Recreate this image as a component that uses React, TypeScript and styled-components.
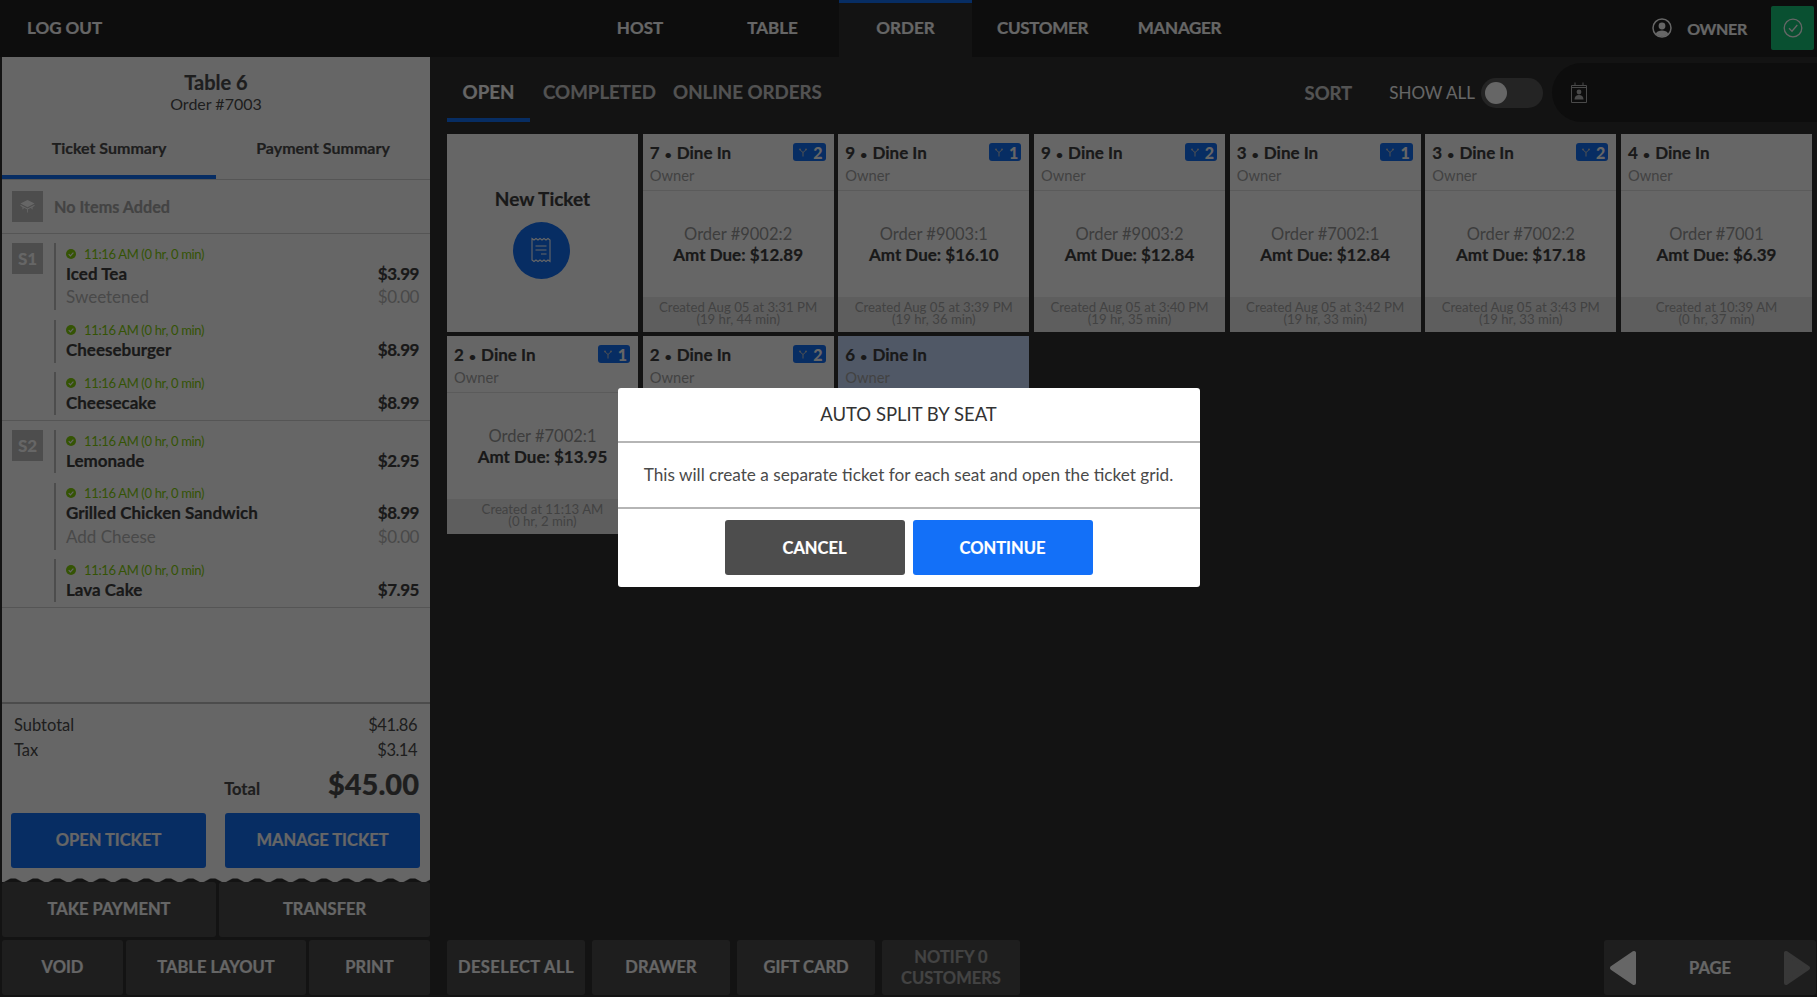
import React from "react";
import styled, { createGlobalStyle, css } from "styled-components";

const Global = createGlobalStyle`
  html, body { margin: 0; height: 100%; overflow: hidden; background: #212121; }
  #root { height: 100%; }
  * { box-sizing: border-box; }
  body { font-family: Lato, "Open Sans", "Liberation Sans", sans-serif; color: #4d4d4d; }
`;

const heavy = css`
  font-weight: 700;
  -webkit-text-stroke: 0.2px currentColor;
`;

const Page = styled.div`
  height: 997px;
  display: grid;
  grid-template-rows: 57px 1fr;
  background: #303030;
`;

const Header = styled.header`
  display: flex;
  align-items: stretch;
  background: #212121;
  padding-right: 3px;
`;
const LogOut = styled.div`
  width: 574px;
  padding: 0 0 3px 27px;
  display: flex;
  align-items: center;
  font-size: 17px;
  color: #fff;
  ${heavy}
`;
const Nav = styled.nav`
  display: flex;
`;
const NavItem = styled.div<{ $w: number; $active?: boolean; $tight?: boolean }>`
  width: ${(p) => p.$w}px;
  display: flex;
  align-items: center;
  justify-content: center;
  font-size: 17px;
  letter-spacing: ${(p) => (p.$tight ? "-0.3px" : "0")};
  color: #fff;
  background: ${(p) => (p.$active ? "#303030" : "transparent")};
  border-top: 3px solid ${(p) => (p.$active ? "#1370f8" : "transparent")};
  padding-bottom: 6px;
  ${heavy}
`;
const UserArea = styled.div`
  margin-left: auto;
  display: flex;
  align-items: center;
  font-size: 16px;
  color: #fff;
  ${heavy}
`;
const UserSvg = styled.svg`
  margin-top: -2px;
`;
const UserName = styled.span`
  margin: 0 24px 0 15px;
  letter-spacing: -0.3px;
`;
const Sync = styled.div`
  width: 43px;
  height: 44px;
  margin-top: -1px;
  border-radius: 2px;
  background: #18c87c;
  display: flex;
  align-items: center;
  justify-content: center;
`;

const Body = styled.div`
  display: grid;
  grid-template-columns: 430px 1fr;
  min-height: 0;
`;

const Side = styled.aside`
  display: flex;
  flex-direction: column;
  padding: 0 0 2px 2px;
  background: #303030;
`;
const Ticket = styled.section`
  height: 824.5px;
  background: #fff;
  display: flex;
  flex-direction: column;
  position: relative;
`;
const TicketHead = styled.div`
  height: 68px;
  padding-top: 14px;
  text-align: center;
`;
const TableName = styled.div`
  font-size: 20px;
  line-height: 22px;
  ${heavy}
`;
const OrderNo = styled.div`
  font-size: 16px;
  line-height: 21px;
`;
const TicketTabs = styled.div`
  display: grid;
  grid-template-columns: 214px 1fr;
  height: 55px;
  border-bottom: 1px solid #d4d4d4;
`;
const TicketTab = styled.div<{ $active?: boolean }>`
  display: flex;
  justify-content: center;
  padding-top: 13px;
  font-size: 16px;
  height: 54px;
  border-bottom: 4px solid ${(p) => (p.$active ? "#1370f8" : "transparent")};
  ${heavy}
`;
const NoItems = styled.div`
  height: 54px;
  padding-left: 10px;
  display: flex;
  align-items: center;
  gap: 11px;
  border-bottom: 1px solid #d4d4d4;
  font-size: 16.2px;
  color: #a8a8a8;
  ${heavy}
`;
const SeatBox = styled.div`
  width: 31px;
  height: 31px;
  background: #c0c0c0;
  color: #fff;
  font-size: 17px;
  font-weight: 900;
  display: flex;
  align-items: center;
  justify-content: center;
  flex: none;
`;
const List = styled.div`
  flex: 1;
  min-height: 0;
`;
const SeatGroup = styled.div`
  display: flex;
  padding: 9px 11px 5px 10px;
  gap: 11px;
  border-bottom: 1px solid #d4d4d4;
`;
const Items = styled.div`
  flex: 1;
  display: flex;
  flex-direction: column;
  gap: 9.5px;
`;
const Item = styled.div<{ $hasMod?: boolean }>`
  border-left: 2px solid #c0c0c0;
  padding: 0 0 ${(p) => (p.$hasMod ? 0 : 4)}px 10px;
`;
const Time = styled.div`
  height: 21px;
  display: flex;
  align-items: center;
  gap: 8px;
  font-size: 13px;
  letter-spacing: -0.35px;
  color: #84d10c;
`;
const Line = styled.div<{ $mod?: boolean }>`
  display: flex;
  justify-content: space-between;
  align-items: ${(p) => (p.$mod ? "flex-end" : "center")};
  font-size: 17px;
  height: ${(p) => (p.$mod ? 28 : 18)}px;
  padding-bottom: ${(p) => (p.$mod ? 3 : 0)}px;
  color: ${(p) => (p.$mod ? "#b6b6b6" : "#404040")};
  ${(p) => (p.$mod ? "" : heavy)}
`;
const Price = styled.span`
  letter-spacing: -0.45px;
`;
const Totals = styled.div`
  border-top: 2px solid #bdbdbd;
  padding: 9px 13px 0 12px;
`;
const TotalRow = styled.div`
  display: flex;
  justify-content: space-between;
  font-size: 16.5px;
  line-height: 25px;
`;
const TotalValue = styled.span`
  letter-spacing: -0.5px;
`;
const GrandRow = styled.div`
  display: flex;
  justify-content: flex-end;
  align-items: baseline;
  margin: 2px -2px 0 0;
  padding-top: 1px;
  height: 40px;
  ${heavy}
`;
const GrandLabel = styled.span`
  font-size: 16.5px;
  margin-right: 68px;
`;
const GrandValue = styled.span`
  font-size: 29px;
  font-weight: 900;
`;
const TicketActions = styled.div`
  display: grid;
  grid-template-columns: 195px 195px;
  justify-content: space-between;
  padding: 0 10px 0 9px;
  margin-top: 8px;
  margin-bottom: 13.5px;
`;
const Primary = styled.button`
  height: 55px;
  border: 0;
  border-radius: 3px;
  padding: 0 0 2px;
  background: #1370f8;
  color: #fff;
  font: 700 16.5px Lato, sans-serif;
  -webkit-text-stroke: 0.2px currentColor;
`;
const Zigzag = styled.svg`
  position: absolute;
  left: 0;
  bottom: 0;
  width: 100%;
  height: 4px;
  display: block;
`;
const ButtonRows = styled.div`
  display: flex;
  flex-direction: column;
  gap: 3.5px;
`;
const ButtonRow = styled.div<{ $cols: string }>`
  display: grid;
  grid-template-columns: ${(p) => p.$cols};
  gap: 3px;
`;
const DarkButton = styled.button<{ $dim?: boolean; $wide?: boolean }>`
  height: 55px;
  border: 0;
  padding: 0 4px;
  border-radius: 3px;
  background: #4d4d4d;
  color: ${(p) => (p.$dim ? "#a8a8a8" : "#fff")};
  font: 700 16.5px/21px Lato, sans-serif;
  letter-spacing: ${(p) => (p.$wide ? "0.45px" : "0")};
  -webkit-text-stroke: 0.2px currentColor;
`;

const Main = styled.main`
  display: flex;
  flex-direction: column;
  padding: 0 5px 2px 17px;
  min-width: 0;
`;
const TabBar = styled.div`
  height: 77px;
  margin-right: -5px;
  display: flex;
  align-items: flex-start;
`;
const OrderTab = styled.div<{ $active?: boolean; $w?: number; $ml?: number }>`
  height: 65px;
  width: ${(p) => (p.$w ? `${p.$w}px` : "auto")};
  margin-left: ${(p) => p.$ml ?? 0}px;
  display: flex;
  justify-content: center;
  padding-top: 24px;
  font-size: 18.7px;
  color: ${(p) => (p.$active ? "#fff" : "#cccccc")};
  border-bottom: 4px solid ${(p) => (p.$active ? "#1370f8" : "transparent")};
  ${heavy}
`;
const RightTools = styled.div`
  margin-left: auto;
  display: flex;
  align-items: center;
  height: 59px;
  margin-top: 6px;
`;
const Sort = styled.span`
  font-size: 18.5px;
  color: #d0d0d0;
  margin-right: 37px;
  ${heavy}
`;
const ShowAll = styled.span`
  font-size: 17px;
  color: #fff;
  margin-right: 6px;
`;
const Toggle = styled.div`
  width: 62px;
  height: 30px;
  border-radius: 15px;
  background: #5a5a5a;
  padding: 4px;
  margin-right: 9px;
`;
const Knob = styled.div`
  width: 22px;
  height: 22px;
  border-radius: 50%;
  background: #fff;
`;
const DatePill = styled.div`
  width: 265px;
  height: 59px;
  border-radius: 30px 0 0 30px;
  background: #212121;
  display: flex;
  align-items: center;
  padding-left: 18px;
`;
const Grid = styled.div`
  display: grid;
  grid-template-columns: repeat(7, 1fr);
  grid-auto-rows: 198px;
  gap: 4px 4.7px;
  flex: 1;
  align-content: start;
`;
const Card = styled.article<{ $selected?: boolean }>`
  display: flex;
  flex-direction: column;
  background: ${(p) => (p.$selected ? "#c8dcff" : "#fff")};
`;
const NewCard = styled.article`
  background: #fff;
  display: flex;
  flex-direction: column;
  align-items: center;
  padding-top: 54px;
`;
const NewTitle = styled.div`
  font-size: 19px;
  line-height: 22px;
  color: #404040;
  ${heavy}
`;
const Circle = styled.div`
  width: 57px;
  height: 57px;
  margin-top: 12px;
  margin-right: 2px;
  border-radius: 50%;
  background: #1370f8;
  display: flex;
  align-items: center;
  justify-content: center;
`;
const CardHead = styled.div`
  height: 57px;
  flex: none;
  padding: 8px 7px 0 7px;
  border-bottom: 1px solid #e4e4e4;
  position: relative;
`;
const CardTitle = styled.div`
  font-size: 17px;
  line-height: 22px;
  color: #404040;
  ${heavy}
`;
const Dot = styled.span`
  font-size: 12px;
  margin: 0 1px;
`;
const CardOwner = styled.div`
  font-size: 14.7px;
  line-height: 19px;
  color: #a6a6a6;
`;
const Badge = styled.div`
  position: absolute;
  top: 9px;
  right: 8px;
  height: 18px;
  display: flex;
  align-items: center;
  gap: 6px;
  padding: 0 3px 0 6px;
  border-radius: 3px;
  background: #1370f8;
  color: #fff;
  font-size: 16px;
  font-weight: 900;
`;
const CardBody = styled.div`
  flex: 1;
  padding-top: 1.5px;
  display: flex;
  flex-direction: column;
  align-items: center;
  justify-content: center;
`;
const CardOrder = styled.div`
  font-size: 16.5px;
  line-height: 20px;
  color: #9a9a9a;
`;
const CardDue = styled.div`
  font-size: 17px;
  line-height: 21px;
  color: #404040;
  ${heavy}
`;
const CardFoot = styled.div`
  height: 35px;
  flex: none;
  padding-top: 4px;
  background: #ebebeb;
  text-align: center;
  font-size: 13.2px;
  line-height: 12px;
  color: #a6a6a6;
`;
const BottomBar = styled.div`
  display: flex;
  gap: 7px;
  margin-right: -4px;
`;
const BottomButton = styled(DarkButton)`
  width: 138px;
`;
const Pager = styled.div`
  margin-left: auto;
  width: 212px;
  height: 55px;
  border-radius: 3px;
  background: #4d4d4d;
  display: flex;
  align-items: center;
  justify-content: space-between;
  padding: 0 5px 0 5px;
  font-size: 16.5px;
  color: #fff;
  ${heavy}
`;

const Overlay = styled.div`
  position: fixed;
  inset: 0;
  background: rgba(0, 0, 0, 0.6);
  display: flex;
  align-items: center;
  justify-content: center;
  padding-bottom: 22px;
`;
const Modal = styled.div`
  width: 582px;
  height: 199px;
  border-radius: 3px;
  background: #fff;
  display: flex;
  flex-direction: column;
`;
const ModalTitle = styled.div`
  height: 55px;
  padding-bottom: 2px;
  display: flex;
  align-items: center;
  justify-content: center;
  border-bottom: 2px solid #b5b5b5;
  font-size: 18.5px;
  color: #333;
`;
const ModalText = styled.div`
  height: 66px;
  padding-bottom: 2px;
  display: flex;
  align-items: center;
  justify-content: center;
  border-bottom: 2px solid #b5b5b5;
  font-size: 17.2px;
  color: #4a4a4a;
`;
const ModalActions = styled.div`
  flex: 1;
  display: flex;
  justify-content: center;
  gap: 8px;
  padding-top: 11px;
`;
const ModalButton = styled.button<{ $primary?: boolean }>`
  width: 180px;
  height: 55px;
  border: 0;
  border-radius: 3px;
  background: ${(p) => (p.$primary ? "#1370f8" : "#4d4d4d")};
  color: #fff;
  font: 700 16.5px Lato, sans-serif;
  -webkit-text-stroke: 0.2px currentColor;
`;

const Check = () => (
  <svg width="10" height="10" viewBox="0 0 10 10">
    <circle cx="5" cy="5" r="5" fill="#84d10c" />
    <path d="M2.7 5.1 4.4 6.8 7.4 3.6" fill="none" stroke="#fff" strokeWidth="1.2" />
  </svg>
);
const Fork = () => (
  <svg width="8" height="9" viewBox="0 0 8 9" fill="none" stroke="#ccc" strokeWidth="1">
    <path d="M4 8.5V4.5L1.2 2M4 4.5 6.8 2" />
    <circle cx="1" cy="1.4" r=".9" fill="#ccc" stroke="none" />
    <circle cx="7" cy="1.4" r=".9" fill="#ccc" stroke="none" />
  </svg>
);
const TableIcon = () => (
  <svg width="15" height="13" viewBox="0 0 15 13" fill="#fff">
    <path d="M7.5 0 14.5 3.6 7.5 7.2 .5 3.6Z" />
    <path d="M.5 4.8 7.5 8.4 14.5 4.8 14.5 6 12.5 7V9.5L11.5 9V7.5L7.9 9.3V12.5H7.1V9.3L3.5 7.5V9L2.5 9.5V7L.5 6Z" />
  </svg>
);
const ReceiptIcon = () => (
  <svg width="20" height="27" viewBox="0 0 20 27" fill="none" stroke="#fff" strokeWidth="1.1">
    <path d="M1 1.5 3 3l2-1.5L7 3l2-1.5L11 3l2-1.5L15 3l2-1.5L19 3v21.5l-2-1.5-2 1.5-2-1.5-2 1.5-2-1.5-2 1.5L5 23l-2 1.5L1 23Z" />
    <path d="M4.5 9h11M4.5 13h11M10 17h5.5" />
  </svg>
);
const UserIcon = () => (
  <UserSvg width="20" height="20" viewBox="0 0 20 20">
    <circle cx="10" cy="10" r="9" fill="none" stroke="#fff" strokeWidth="1.5" />
    <circle cx="10" cy="8" r="3.4" fill="#fff" />
    <path d="M3.8 15.8C5 13.2 7.4 12.6 10 12.6S15 13.2 16.2 15.8C14.6 17.6 12.4 18.6 10 18.6S5.4 17.6 3.8 15.8Z" fill="#fff" />
  </UserSvg>
);
const SyncIcon = () => (
  <svg width="20" height="20" viewBox="0 0 20 20" fill="none" stroke="#fff" strokeWidth="1.3">
    <circle cx="10" cy="10" r="8.8" />
    <path d="M6 10.3 9 13.2 14.3 7" />
  </svg>
);
const CalendarIcon = () => (
  <svg width="18" height="21" viewBox="0 0 18 21" fill="none" stroke="#b8b8b8" strokeWidth="1">
    <path d="M1.5 3.5h15v17h-15Z" />
    <path d="M1.5 5.5h15" />
    <path d="M5 .5v3M13 .5v3" />
    <circle cx="9" cy="10" r="2.4" fill="#b8b8b8" stroke="none" />
    <path d="M4.5 17.5c0-3 2-4.4 4.5-4.4s4.5 1.4 4.5 4.4Z" fill="#b8b8b8" stroke="none" />
  </svg>
);
const Arrow = ({ dir, dim }: { dir: "left" | "right"; dim?: boolean }) => (
  <svg width="28" height="36" viewBox="0 0 28 36">
    <path
      d={dir === "left" ? "M25 3V33L3 18Z" : "M3 3V33L25 18Z"}
      fill={dim ? "#8c8c8c" : "#fff"}
      stroke={dim ? "#8c8c8c" : "#fff"}
      strokeWidth="4"
      strokeLinejoin="round"
    />
  </svg>
);

type T = { seat: string; split?: number; order: string; due: string; l1: string; l2: string; selected?: boolean };
const tickets: T[] = [
  { seat: "7", split: 2, order: "Order #9002:2", due: "$12.89", l1: "Created Aug 05 at 3:31 PM", l2: "(19 hr, 44 min)" },
  { seat: "9", split: 1, order: "Order #9003:1", due: "$16.10", l1: "Created Aug 05 at 3:39 PM", l2: "(19 hr, 36 min)" },
  { seat: "9", split: 2, order: "Order #9003:2", due: "$12.84", l1: "Created Aug 05 at 3:40 PM", l2: "(19 hr, 35 min)" },
  { seat: "3", split: 1, order: "Order #7002:1", due: "$12.84", l1: "Created Aug 05 at 3:42 PM", l2: "(19 hr, 33 min)" },
  { seat: "3", split: 2, order: "Order #7002:2", due: "$17.18", l1: "Created Aug 05 at 3:43 PM", l2: "(19 hr, 33 min)" },
  { seat: "4", order: "Order #7001", due: "$6.39", l1: "Created at 10:39 AM", l2: "(0 hr, 37 min)" },
  { seat: "2", split: 1, order: "Order #7002:1", due: "$13.95", l1: "Created at 11:13 AM", l2: "(0 hr, 2 min)" },
  { seat: "2", split: 2, order: "Order #7002:2", due: "$13.95", l1: "Created at 11:13 AM", l2: "(0 hr, 2 min)" },
  { seat: "6", order: "Order #7003", due: "$45.00", l1: "Created at 11:15 AM", l2: "(0 hr, 0 min)", selected: true },
];

type LineItem = { name: string; price: string; mod?: string };
const seats: { seat: string; items: LineItem[] }[] = [
  {
    seat: "S1",
    items: [
      { name: "Iced Tea", price: "$3.99", mod: "Sweetened" },
      { name: "Cheeseburger", price: "$8.99" },
      { name: "Cheesecake", price: "$8.99" },
    ],
  },
  {
    seat: "S2",
    items: [
      { name: "Lemonade", price: "$2.95" },
      { name: "Grilled Chicken Sandwich", price: "$8.99", mod: "Add Cheese" },
      { name: "Lava Cake", price: "$7.95" },
    ],
  },
];

export default function App() {
  return (
    <Page>
      <Global />
      <Header>
        <LogOut>LOG OUT</LogOut>
        <Nav>
          <NavItem $w={132}>HOST</NavItem>
          <NavItem $w={133}>TABLE</NavItem>
          <NavItem $w={133} $active>ORDER</NavItem>
          <NavItem $w={141} $tight>CUSTOMER</NavItem>
          <NavItem $w={133} $tight>MANAGER</NavItem>
        </Nav>
        <UserArea>
          <UserIcon />
          <UserName>OWNER</UserName>
          <Sync><SyncIcon /></Sync>
        </UserArea>
      </Header>
      <Body>
        <Side>
          <Ticket>
            <TicketHead>
              <TableName>Table 6</TableName>
              <OrderNo>Order #7003</OrderNo>
            </TicketHead>
            <TicketTabs>
              <TicketTab $active>Ticket Summary</TicketTab>
              <TicketTab>Payment Summary</TicketTab>
            </TicketTabs>
            <NoItems>
              <SeatBox><TableIcon /></SeatBox>
              No Items Added
            </NoItems>
            <List>
              {seats.map((s) => (
                <SeatGroup key={s.seat}>
                  <SeatBox>{s.seat}</SeatBox>
                  <Items>
                    {s.items.map((it) => (
                      <Item key={it.name} $hasMod={!!it.mod}>
                        <Time><Check />11:16 AM (0 hr, 0 min)</Time>
                        <Line><span>{it.name}</span><Price>{it.price}</Price></Line>
                        {it.mod && <Line $mod><span>{it.mod}</span><Price>$0.00</Price></Line>}
                      </Item>
                    ))}
                  </Items>
                </SeatGroup>
              ))}
            </List>
            <Totals>
              <TotalRow><span>Subtotal</span><TotalValue>$41.86</TotalValue></TotalRow>
              <TotalRow><span>Tax</span><TotalValue>$3.14</TotalValue></TotalRow>
              <GrandRow>
                <GrandLabel>Total</GrandLabel>
                <GrandValue>$45.00</GrandValue>
              </GrandRow>
            </Totals>
            <TicketActions>
              <Primary>OPEN TICKET</Primary>
              <Primary>MANAGE TICKET</Primary>
            </TicketActions>
            <Zigzag viewBox="0 0 428 4" preserveAspectRatio="none">
              <defs>
                <pattern id="zig" width="22.2" height="4" patternUnits="userSpaceOnUse">
                  <path d="M2 4 8.5 .5H13.7L20.2 4Z" fill="#303030" />
                </pattern>
              </defs>
              <rect width="428" height="4" fill="url(#zig)" />
            </Zigzag>
          </Ticket>
          <ButtonRows>
            <ButtonRow $cols="214px 1fr">
              <DarkButton>TAKE PAYMENT</DarkButton>
              <DarkButton>TRANSFER</DarkButton>
            </ButtonRow>
            <ButtonRow $cols="121px 180px 1fr">
              <DarkButton>VOID</DarkButton>
              <DarkButton>TABLE LAYOUT</DarkButton>
              <DarkButton>PRINT</DarkButton>
            </ButtonRow>
          </ButtonRows>
        </Side>
        <Main>
          <TabBar>
            <OrderTab $active $w={83}>OPEN</OrderTab>
            <OrderTab $ml={13}>COMPLETED</OrderTab>
            <OrderTab $ml={17}>ONLINE ORDERS</OrderTab>
            <RightTools>
              <Sort>SORT</Sort>
              <ShowAll>SHOW ALL</ShowAll>
              <Toggle><Knob /></Toggle>
              <DatePill><CalendarIcon /></DatePill>
            </RightTools>
          </TabBar>
          <Grid>
            <NewCard>
              <NewTitle>New Ticket</NewTitle>
              <Circle><ReceiptIcon /></Circle>
            </NewCard>
            {tickets.map((t, i) => (
              <Card key={i} $selected={t.selected}>
                <CardHead>
                  <CardTitle>{t.seat} <Dot>•</Dot> Dine In</CardTitle>
                  <CardOwner>Owner</CardOwner>
                  {t.split && <Badge><Fork />{t.split}</Badge>}
                </CardHead>
                <CardBody>
                  <CardOrder>{t.order}</CardOrder>
                  <CardDue>Amt Due: {t.due}</CardDue>
                </CardBody>
                <CardFoot>{t.l1}<br />{t.l2}</CardFoot>
              </Card>
            ))}
          </Grid>
          <BottomBar>
            <BottomButton $wide>DESELECT ALL</BottomButton>
            <BottomButton>DRAWER</BottomButton>
            <BottomButton>GIFT CARD</BottomButton>
            <BottomButton $dim>NOTIFY 0<br />CUSTOMERS</BottomButton>
            <Pager>
              <Arrow dir="left" />
              PAGE
              <Arrow dir="right" dim />
            </Pager>
          </BottomBar>
        </Main>
      </Body>
      <Overlay>
        <Modal>
          <ModalTitle>AUTO SPLIT BY SEAT</ModalTitle>
          <ModalText>This will create a separate ticket for each seat and open the ticket grid.</ModalText>
          <ModalActions>
            <ModalButton>CANCEL</ModalButton>
            <ModalButton $primary>CONTINUE</ModalButton>
          </ModalActions>
        </Modal>
      </Overlay>
    </Page>
  );
}
